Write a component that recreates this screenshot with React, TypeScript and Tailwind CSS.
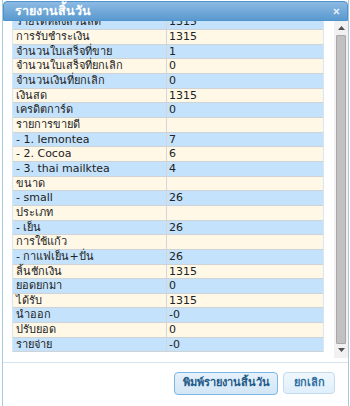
import React from 'react'

const rows: [string, string][] = [
  ['รายได้หลังส่วนลด', '1315'],
  ['การรับชำระเงิน', '1315'],
  ['จำนวนใบเสร็จที่ขาย', '1'],
  ['จำนวนใบเสร็จที่ยกเลิก', '0'],
  ['จำนวนเงินที่ยกเลิก', '0'],
  ['เงินสด', '1315'],
  ['เครดิตการ์ด', '0'],
  ['รายการขายดี', ''],
  ['- 1. lemontea', '7'],
  ['- 2. Cocoa', '6'],
  ['- 3. thai mailktea', '4'],
  ['ขนาด', ''],
  ['- small', '26'],
  ['ประเภท', ''],
  ['- เย็น', '26'],
  ['การใช้แก้ว', ''],
  ['- กาแฟเย็น+ปั่น', '26'],
  ['ลิ้นชักเงิน', '1315'],
  ['ยอดยกมา', '0'],
  ['ได้รับ', '1315'],
  ['นำออก', '-0'],
  ['ปรับยอด', '0'],
  ['รายจ่าย', '-0'],
]

export default function App() {
  return (
    <div className="h-[406px] w-[350px] bg-white font-['Tahoma','DejaVu_Sans','Noto_Sans',sans-serif] text-[11px] text-[#222]">
      <div className="flex h-full flex-col border-x border-[#a6c9e2] ml-[2px] mr-px">
        {/* title bar */}
        <div className="mt-px flex h-[20px] shrink-0 items-center justify-between rounded-t-[4px] border border-[#4f93cd] bg-gradient-to-b from-[#8cbae3] to-[#5a99cf] pl-[11px] pr-[6px]">
          <span className="text-[12.5px] font-bold text-white">รายงานสิ้นวัน</span>
          <svg width="7" height="7" viewBox="0 0 7 7" className="mr-[1px]">
            <path d="M1 1 L6 6 M6 1 L1 6" stroke="#e4eef8" strokeWidth="1.6" />
          </svg>
        </div>

        {/* report body */}
        <div className="flex h-[337px] shrink-0">
          <div className="flex-1 overflow-hidden pl-[9px] pr-[10px]">
            <div className="mt-[-5.67px] border-x border-[#d6e6f3]">
              {rows.map(([label, value], i) => (
                <div
                  key={i}
                  className={`flex h-[14.67px] border-b border-[#cfd3d6] leading-[13.67px] ${i % 2 === 0 ? 'bg-[#c4e2fc]' : 'bg-[#fff8e7]'}`}
                >
                  <div className="w-[154px] shrink-0 border-r border-[#d3d7da] pl-[3px] whitespace-nowrap">{label}</div>
                  <div className="flex-1 pl-[2px]">{value}</div>
                </div>
              ))}
            </div>
          </div>

          {/* scrollbar */}
          <div className="flex w-[14px] shrink-0 flex-col items-center bg-[#f1f1f1] pb-[2px]">
            <div className="flex h-[14px] w-full items-center justify-center">
              <svg width="7" height="4" viewBox="0 0 7 4"><path d="M0 4 L3.5 0 L7 4 Z" fill="#505050" /></svg>
            </div>
            <div className="w-[10px] flex-1 rounded-[1px] border border-[#a8a8a8] bg-[#c1c1c1]" />
            <div className="flex h-[12px] w-full items-center justify-center">
              <svg width="7" height="4" viewBox="0 0 7 4"><path d="M0 0 L7 0 L3.5 4 Z" fill="#505050" /></svg>
            </div>
          </div>
        </div>

        {/* button pane */}
        <div className="mt-[4px] flex justify-end gap-[5px] border-t border-[#d5e3ef] pt-[9px] pr-[13px]">
          <button className="h-[23px] w-[104px] rounded-[4px] border border-[#79b7e7] bg-gradient-to-b from-[#e6f1fb] to-[#d3e6f6] text-[11px] font-bold text-[#1d5987]">
            พิมพ์รายงานสิ้นวัน
          </button>
          <button className="h-[22px] w-[52px] rounded-[4px] border border-[#c5dbec] bg-gradient-to-b from-[#f0f7fd] to-[#dfeffc] text-[11px] font-bold text-[#2e6e9e]">
            ยกเลิก
          </button>
        </div>
      </div>
    </div>
  )
}
